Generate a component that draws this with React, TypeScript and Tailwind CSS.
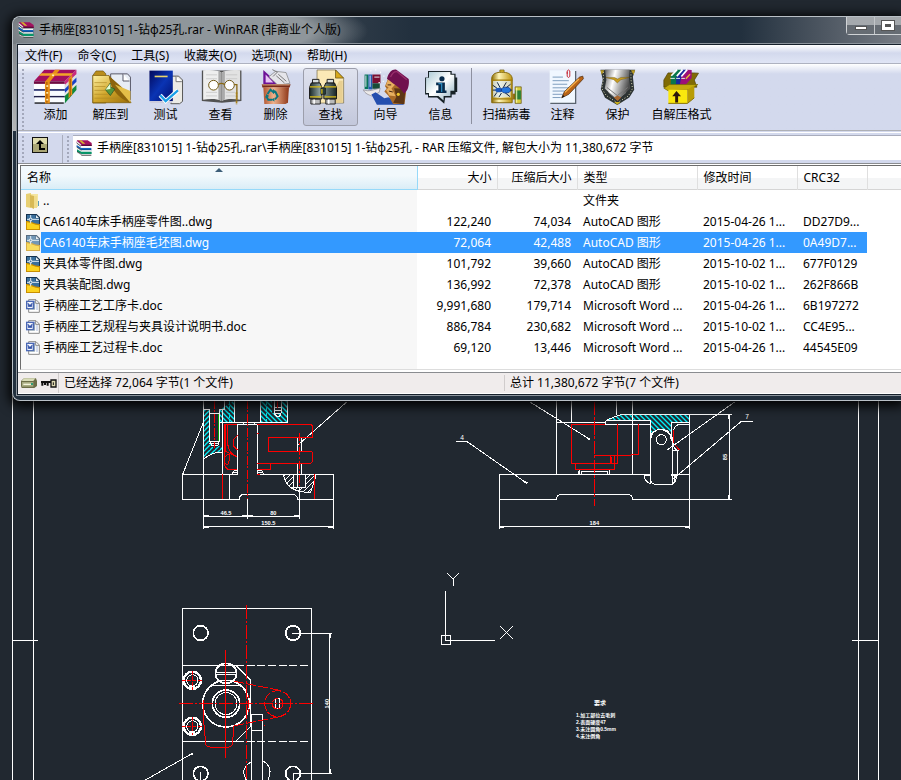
import type { ReactNode } from "react";

/* ── Icons ── */

function RarIcon() {
  return (
    <svg viewBox="0 0 48 48" className="size-4 shrink-0" aria-hidden="true">
      <path d="M3 1h32l12 8v9H16L2 8z" fill="#a3125f" />
      <path d="M2 2l14 12v5L2 9z" fill="#e9e9e9" />
      <path d="M16 14h31v4H16z" fill="#5b0a38" />
      <path d="M8 1h8l12 10h-8z" fill="#d6b42f" />
      <path d="M2 10l14 10h29v4H16L2 14z" fill="#f4f4f4" />
      <path d="M2 15l14 9h30v7H16L2 21z" fill="#1464bc" />
      <path d="M16 29h30v2H16z" fill="#0a2450" />
      <path d="M2 22l14 9h29v4H16L2 26z" fill="#f4f4f4" />
      <path d="M3 28l13 7h31v7H16L3 35z" fill="#0a9468" />
      <path d="M4 36l12 6h30v4H16L4 40z" fill="#e4e4e4" />
      <path d="M2 9l13 10M2 21l14 10M3 35l13 8M16 46h30" stroke="#181818" strokeWidth="2" />
    </svg>
  );
}

function UpIcon() {
  return (
    <svg viewBox="0 0 16 16" className="size-4" aria-hidden="true">
      <rect width="16" height="16" fill="#111" />
      <rect x="1" y="1" width="14" height="14" fill="#a9a574" />
      <rect x="1" y="1" width="14" height="6" fill="#dedbac" />
      <path d="M8 3l4 4H9v4h4v2H7V7H4z" fill="#000" />
    </svg>
  );
}

function FolderIcon() {
  return (
    <svg viewBox="0 0 14 16" className="h-4 w-[14px] shrink-0" aria-hidden="true">
      <path d="M0 1l5-1v15l-5-1z" fill="#e8cf71" />
      <path d="M5 1h7v13H5z" fill="#f4e5a0" />
      <path d="M4 2l4 1v13l-4-2z" fill="#d8b955" />
      <path d="M8 3h3v12H8z" fill="#f0dc8c" />
      <path d="M12 8h1v5h-1z" fill="#5b9bb8" />
    </svg>
  );
}

function DwgIcon() {
  return (
    <svg viewBox="0 0 42 48" className="h-4 w-[14px] shrink-0" aria-hidden="true">
      <path d="M0 0h32l10 10v38H0z" fill="#16324e" />
      <path d="M3 3h26v10h10v22L3 22z" fill="#3a6f9c" />
      <path d="M30 3l9 9h-9z" fill="#e4edf4" />
      <path d="M0 21c14 0 24 8 42 9v18H0z" fill="#c98f00" />
      <path d="M3 25c12 0 22 8 36 9v11H3z" fill="#fbd21f" />
      <path d="M14 3v8M14 20v8M3 16h6M19 16h20" stroke="#dfeaf2" strokeWidth="3" />
      <circle cx="14" cy="16" r="4" fill="#3a6f9c" stroke="#fff" strokeWidth="3" />
    </svg>
  );
}

function DocIcon() {
  return (
    <svg viewBox="0 0 42 42" className="h-[14px] w-[14px] shrink-0" aria-hidden="true">
      <path d="M8 2h22l10 10v28H8z" fill="#fff" stroke="#8a8a8a" strokeWidth="3" />
      <path d="M29 3v10h10" fill="none" stroke="#8a8a8a" strokeWidth="3" />
      <path d="M30 18h6M30 24h6M30 30h6" stroke="#7a94cc" strokeWidth="2" />
      <path d="M0 5h26v26H0z" fill="#4a68b5" />
      <path d="M4 9h16v18H4z" fill="#f2f5fc" />
      <path d="M6 12l3 12 3-8 3 8 3-12" fill="none" stroke="#2b4ba3" strokeWidth="3" />
      <path d="M26 9v22H10" fill="none" stroke="#9aa" strokeWidth="2" />
    </svg>
  );
}

function ToolSvg({ box, children }: { box: string; children: ReactNode }) {
  return (
    <svg viewBox={box} className="h-[37px] w-[49px]" aria-hidden="true">
      {children}
    </svg>
  );
}

const addIcon = (
  <ToolSvg box="93 208 147 111">
    <path d="M100 246L132 210h99l-36 36z" fill="#a3105f" />
    <path d="M100 246h95v8h-95z" fill="#6f0a40" />
    <path d="M195 246l36-36v14l-36 34z" fill="#c92a7d" />
    <path d="M100 254h95v17h-95z" fill="#fff" />
    <path d="M195 258l36-34v10l-36 36z" fill="#dcdcdc" />
    <path d="M100 270h95v5h-95z" fill="#222b6b" />
    <path d="M195 270l36-36v14l-36 36z" fill="#1741c8" />
    <path d="M100 276h95v15h-95z" fill="#f8fbff" />
    <path d="M195 282l36-34v8l-36 36z" fill="#e4e4e4" />
    <path d="M100 291h95v5h-95z" fill="#20204a" />
    <path d="M195 291l36-34v16l-36 41z" fill="#10893c" />
    <path d="M102 296h93v15h-93z" fill="#f8fbff" />
    <path d="M102 311h90v4h-90z" fill="#111" />
    <path d="M134 247l31-37h15l-31 37v67h-15z" fill="#e88f16" />
    <path d="M115 229l8-8h97l-6 8z" fill="#f2a428" />
    <path d="M207 238l11-12v60l-11 12z" fill="#e88f16" />
    <path d="M140 248v64M212 238v54" stroke="#9b5200" strokeWidth="3" />
    <g fill="#fff0ad">
      <rect x="138" y="258" width="6" height="5" />
      <rect x="138" y="279" width="6" height="5" />
      <rect x="138" y="300" width="6" height="5" />
      <rect x="156" y="225" width="6" height="5" />
    </g>
  </ToolSvg>
);

const extractIcon = (
  <ToolSvg box="258 208 147 111">
    <defs>
      <linearGradient id="fold" x2="1" y2="1">
        <stop stopColor="#fff2a4" />
        <stop offset=".5" stopColor="#d1a62b" />
        <stop offset="1" stopColor="#9a6d08" />
      </linearGradient>
    </defs>
    <path d="M277 228l10-14h22l8 9v90h-40z" fill="#b98d1c" stroke="#69500b" strokeWidth="2" />
    <path d="M332 223h52l9 10v70h-61z" fill="#e8edf5" stroke="#556" strokeWidth="3" />
    <path d="M370 223v22h20" fill="#fff" stroke="#556" strokeWidth="3" />
    <path d="M277 228h50l68 84H277z" fill="url(#fold)" stroke="#735405" strokeWidth="2" />
    <path d="M326 228c26 25 55 40 68 84-25-7-62-33-68-84z" fill="#8c640d" />
    <path d="M345 256l48 20v36z" fill="#e4be48" />
    <path d="M282 250h38M282 262h34M282 274h34M282 286h44M282 298h80" stroke="#b08a25" strokeWidth="2" />
    <path d="M316 272l15-21v12l14 7-14 20z" fill="#54963d" stroke="#204a20" strokeWidth="2" />
    <path d="M316 272l15-19v17z" fill="#e6ffdc" />
  </ToolSvg>
);

const testIcon = (
  <ToolSvg box="423 208 147 111">
    <defs>
      <linearGradient id="tbook" x2="1" y2="1">
        <stop stopColor="#02085b" />
        <stop offset=".5" stopColor="#0a34b4" />
        <stop offset="1" stopColor="#021070" />
      </linearGradient>
    </defs>
    <path d="M513 230h24l12 12v66l-9 7h-27z" fill="#ecebe6" stroke="#555" strokeWidth="3" />
    <path d="M529 230v17h18" fill="#fff" stroke="#777" strokeWidth="3" />
    <path d="M447 213h72v94h-72z" fill="url(#tbook)" />
    <path d="M447 307h72l-5 6h-64z" fill="#ccd" />
    <path d="M463 231h40" stroke="#e9d46b" strokeWidth="5" />
    <path d="M480 289l17 18 38-33" fill="none" stroke="#fff" strokeWidth="13" />
    <path d="M480 289l17 18 38-33" fill="none" stroke="#18a0e8" strokeWidth="7" />
  </ToolSvg>
);

const viewIcon = (
  <ToolSvg box="588 208 147 111">
    <path d="M604 213h122v94l-60 5-62-5z" fill="#525252" />
    <path d="M608 212c24-3 44 0 56 6v88c-14-7-36-7-56-3z" fill="#eee" />
    <path d="M722 212c-24-3-44 0-56 6v88c14-7 36-7 56-3z" fill="#e2e2e2" />
    <path d="M655 215l9 4v87l-9-4zM675 215l-9 4v87l9-4z" fill="#aaa" />
    <path d="M617 226h34M617 238h34M617 280h34M617 291h34M678 226h35M678 238h35M678 280h28M678 291h28" stroke="#bdbdbd" strokeWidth="2" />
    <circle cx="640" cy="258" r="15" fill="#fff" stroke="#6e5510" strokeWidth="3" />
    <circle cx="689" cy="258" r="15" fill="#fff" stroke="#6e5510" strokeWidth="3" />
    <path d="M655 256q9-7 19 0M704 256h8v47" fill="none" stroke="#8a6914" strokeWidth="4" />
    <path d="M711 280v37" stroke="#a8801b" strokeWidth="5" strokeDasharray="7 2" />
  </ToolSvg>
);

const deleteIcon = (
  <ToolSvg box="753 208 147 111">
    <defs>
      <linearGradient id="bin">
        <stop stopColor="#b0552f" />
        <stop offset=".4" stopColor="#efb28c" />
        <stop offset="1" stopColor="#8e3718" />
      </linearGradient>
    </defs>
    <path d="M789 211l46 43-46 5z" fill="#6c1197" />
    <path d="M796 225l24 25h-24z" fill="#e8c5f4" />
    <path d="M806 232l21-17 32 4 12 33-37 6z" fill="#e5e5ea" stroke="#777" strokeWidth="2" />
    <path d="M817 210l15 8-13 13M835 224l25 22M829 229l25 22" fill="none" stroke="#777" strokeWidth="3" />
    <path d="M784 255h89l-3 10h-84z" fill="#782b18" />
    <path d="M789 264h79l-3 48-8 4h-65z" fill="url(#bin)" />
    <path d="M786 257h84" stroke="#deb08a" strokeWidth="3" />
    <path d="M802 285l9-13 11 9M825 276l8 16-8 10M817 303h-13l-6-12" fill="none" stroke="#087781" strokeWidth="6" />
    <path d="M819 270v16l9-9zM798 285l9 6-12 8zM823 297v12l-8-7z" fill="#087781" />
  </ToolSvg>
);

const findIcon = (
  <ToolSvg box="18 208 147 111">
    <defs>
      <linearGradient id="barrel">
        <stop stopColor="#1b2929" />
        <stop offset=".4" stopColor="#92a6a4" />
        <stop offset="1" stopColor="#192525" />
      </linearGradient>
    </defs>
    <path d="M50 211h58l24 26v76H50z" fill="#fbe9b6" stroke="#6f643f" strokeWidth="2" />
    <path d="M107 211v25h25z" fill="#d7a81c" stroke="#5a4509" strokeWidth="2" />
    <path d="M118 244h11v68H86z" fill="#e8cf91" />
    <path d="M36 240h20v12H36zM81 240h20v12H81z" fill="#d8dddd" stroke="#222" strokeWidth="3" />
    <path d="M32 251h27l6 14v35H27v-35zM77 251h27l6 14v35H71v-35z" fill="url(#barrel)" stroke="#111" strokeWidth="3" />
    <path d="M62 266h14v20H62z" fill="#263c3c" stroke="#111" strokeWidth="2" />
    <path d="M28 263h36M73 263h36M28 294h36M73 294h36M65 270v14" stroke="#d8b912" strokeWidth="4" />
    <path d="M31 301h29v15H31zM77 301h29v15H77z" fill="#bbb" stroke="#222" strokeWidth="3" />
    <path d="M41 302v13M86 302v13" stroke="#fff" strokeWidth="5" />
  </ToolSvg>
);

const wizardIcon = (
  <ToolSvg box="183 208 147 111">
    <path d="M192 225h12v45h-12z" fill="#08745b" />
    <path d="M204 225h12v46h-12z" fill="#205aae" />
    <path d="M216 225h25v27h-25z" fill="#790e32" />
    <path d="M216 252h23v17h-23z" fill="#194b36" />
    <path d="M196 228v35M209 228v35M222 233h16" stroke="#e3e8ee" strokeWidth="3" />
    <path d="M188 272c18 8 35-2 52-5l-3 13-23 11c-10-4-20-6-26-19z" fill="#eceaea" stroke="#86848b" strokeWidth="2" />
    <path d="M213 287l13-7 27 18 12-3 50 23h-85z" fill="#254fae" />
    <path d="M264 239l31 5 25 37-5 35h-35l-15-26-12-13 7-9-5-7z" fill="#a96a27" />
    <path d="M264 240l28 10-17 18 13 24-20-2-10-17 8-8-8-6z" fill="#e8af60" />
    <path d="M283 267l35 2-4 48-34-5 10-18z" fill="#5d3615" />
    <path d="M261 238c5-21 18-31 29-28l38 29c3 18-3 38-14 45-8-15-27-26-53-46z" fill="#70104e" />
    <path d="M272 233c5-12 13-18 20-17l30 25" fill="none" stroke="#98306c" strokeWidth="4" />
    <path d="M263 257h11M267 276l12 3" stroke="#3f210f" strokeWidth="3" />
    <circle cx="296" cy="286" r="5" fill="#f0c52a" />
    <path d="M210 214h3M225 211h3M240 218h3M250 230h3M248 246h3M235 250h4" stroke="#fff" strokeWidth="4" />
  </ToolSvg>
);

const infoIcon = (
  <ToolSvg box="348 208 147 111">
    <defs>
      <linearGradient id="info" x2="1" y2="1">
        <stop stopColor="#a9c8d4" />
        <stop offset=".5" stopColor="#fff" />
        <stop offset="1" stopColor="#86aabc" />
      </linearGradient>
    </defs>
    <path d="M383 214h73v9h12v11h5v45h-5v8h-12v9h-20l-3 19-22-19h-28v-9h-9v-53h9z" fill="#172126" />
    <path d="M386 217h66v9h12v49h-12v16h-21v14l-16-14h-29v-9h-9v-47h9z" fill="url(#info)" />
    <circle cx="426" cy="238" r="8" fill="#092c4c" />
    <path d="M408 250h27v24h5v8h-32v-8h7v-16h-7z" fill="#092c4c" />
    <path d="M415 253h10v26" fill="none" stroke="#2b88ba" strokeWidth="4" />
  </ToolSvg>
);

const virusIcon = (
  <ToolSvg box="546 208 147 111">
    <defs>
      <linearGradient id="tank">
        <stop stopColor="#8d6d02" />
        <stop offset=".35" stopColor="#fff6b8" />
        <stop offset="1" stopColor="#bd9410" />
      </linearGradient>
    </defs>
    <path d="M599 211h13v9h-13z" fill="#d9b72b" stroke="#675205" strokeWidth="2" />
    <path d="M574 236c2-14 14-18 31-18s29 4 32 18v76h-63z" fill="url(#tank)" stroke="#836709" strokeWidth="3" />
    <path d="M578 245h54v50h-54z" fill="#dff0ff" opacity=".7" />
    <path d="M573 242h65M573 300h65" stroke="#a27c08" strokeWidth="4" />
    <path d="M590 267l-13-9M588 273h-11M590 280l-9 13M600 266l-9-17M604 282l-8 13M609 266l10-17M617 267l15-12M622 273h14M615 281l15 12" stroke="#10223e" strokeWidth="3" />
    <ellipse cx="596" cy="273" rx="11" ry="7" fill="#1958bf" />
    <ellipse cx="618" cy="273" rx="14" ry="9" fill="#2377df" stroke="#092a79" strokeWidth="2" />
    <path d="M638 284h10v18h-10z" fill="#967014" />
    <path d="M646 263h19v51h-19z" fill="#d7cd3c" stroke="#5e4b06" strokeWidth="2" />
    <path d="M647 274h17v28h-17z" fill="#2b7f36" />
    <path d="M651 266v46" stroke="#fbf8b8" strokeWidth="3" />
  </ToolSvg>
);

const commentIcon = (
  <ToolSvg box="714 208 147 111">
    <path d="M748 212h80v101h-80z" fill="#f0f7ff" />
    <path d="M828 214v100h-78" fill="none" stroke="#59636e" strokeWidth="4" />
    <path d="M757 233h32M757 244h50M757 255h45M757 266h51M757 276h43M757 286h33M757 296h25" stroke="#7b9bbd" strokeWidth="3" />
    <path d="M802 217v14q4 6 8 0v-17q-4-6-8 0v9" fill="none" stroke="#c42330" strokeWidth="3" />
    <path d="M785 297l8-19 47-45 10-3 2 8-45 48z" fill="#b96315" stroke="#412005" strokeWidth="2" />
    <path d="M795 280l43-41" stroke="#f8b24c" strokeWidth="4" />
    <path d="M785 297l4-9 5 5z" fill="#111" />
  </ToolSvg>
);

const protectIcon = (
  <ToolSvg box="-21 208 147 111">
    <defs>
      <linearGradient id="shield" x2="1" y2=".3">
        <stop stopColor="#5c5c5c" />
        <stop offset=".4" stopColor="#fff" />
        <stop offset=".65" stopColor="#b4b4b4" />
        <stop offset="1" stopColor="#4c4c4c" />
      </linearGradient>
    </defs>
    <path d="M0 210h107l-7 22 4 40-15 24-37 23-38-22L1 270l6-30z" fill="#2d3333" />
    <path d="M14 210h76l-2 28 4 30-40 36-39-36 5-26z" fill="url(#shield)" />
    <path d="M9 217v24l-5 27 14 22 34 22 34-21 13-23-5-27v-24" fill="none" stroke="#dfdfb8" strokeWidth="3" strokeDasharray="3 6" />
    <path d="M15 234h28l10 5 10-5h27l-27 7-11 10-11-10z" fill="#c59b20" stroke="#4b3907" strokeWidth="1" />
    <path d="M20 265l32 25 32-25M24 280l28 23 27-23" fill="none" stroke="#777" strokeWidth="3" />
    <path d="M41 296l12-6 11 6-11 11z" fill="#a8662e" />
    <path d="M42 310h20l-10 8z" fill="#c9ad1d" />
    <path d="M0 212h12l-8 14zM107 212H94l8 14z" fill="#b89a24" />
  </ToolSvg>
);

const sfxIcon = (
  <ToolSvg box="171 208 147 111">
    <path d="M190 242l13-22h78l16 1-13 21 8 22H190z" fill="#806b05" stroke="#4b3d00" strokeWidth="2" />
    <path d="M212 230l19-20h12l-14 48h-18z" fill="#08764c" />
    <path d="M229 231l18-21h12l-15 48h-17z" fill="#172a9c" />
    <path d="M244 232l18-22 14 1v25l-20 22h-17z" fill="#9c1078" />
    <path d="M213 229l18-19M230 230l18-20M244 231l18-21" stroke="#fff" strokeWidth="5" />
    <path d="M210 237h14M228 237h12M244 237h11" stroke="#dff1ea" strokeWidth="3" />
    <path d="M258 238l13-14" stroke="#eabd31" strokeWidth="4" />
    <path d="M190 267l17-11h88l-27 16-65 3z" fill="#c4ad0c" stroke="#716300" strokeWidth="2" />
    <path d="M204 272h58v42h-58z" fill="#fae80e" />
    <path d="M262 272l22-14v39l-22 17z" fill="#b89c05" />
    <path d="M204 314h59l21-17" fill="none" stroke="#857000" strokeWidth="3" />
    <path d="M229 276l14 16h-9v19h-9v-19h-9z" fill="#2d1709" />
  </ToolSvg>
);

/* ── Data ── */

const menus = ["文件(F)", "命令(C)", "工具(S)", "收藏夹(O)", "选项(N)", "帮助(H)"];

const tools = [
  { label: "添加", icon: addIcon },
  { label: "解压到", icon: extractIcon },
  { label: "测试", icon: testIcon },
  { label: "查看", icon: viewIcon },
  { label: "删除", icon: deleteIcon },
  { label: "查找", icon: findIcon, active: true },
  { label: "向导", icon: wizardIcon },
  { label: "信息", icon: infoIcon },
];

const extraTools = [
  { label: "扫描病毒", icon: virusIcon, width: "w-[57px]" },
  { label: "注释", icon: commentIcon, width: "w-[55px]" },
  { label: "保护", icon: protectIcon, width: "w-[55px]" },
  { label: "自解压格式", icon: sfxIcon, width: "w-[73px]" },
];

const files = [
  { kind: "dir", name: "..", size: "", packed: "", type: "文件夹", date: "", crc: "" },
  { kind: "dwg", name: "CA6140车床手柄座零件图..dwg", size: "122,240", packed: "74,034", type: "AutoCAD 图形", date: "2015-04-26 1...", crc: "DD27D9..." },
  { kind: "dwg", name: "CA6140车床手柄座毛坯图.dwg", size: "72,064", packed: "42,488", type: "AutoCAD 图形", date: "2015-04-26 1...", crc: "0A49D7...", selected: true },
  { kind: "dwg", name: "夹具体零件图.dwg", size: "101,792", packed: "39,660", type: "AutoCAD 图形", date: "2015-10-02 1...", crc: "677F0129" },
  { kind: "dwg", name: "夹具装配图.dwg", size: "136,992", packed: "72,378", type: "AutoCAD 图形", date: "2015-10-02 1...", crc: "262F866B" },
  { kind: "doc", name: "手柄座工艺工序卡.doc", size: "9,991,680", packed: "179,714", type: "Microsoft Word ...", date: "2015-04-26 1...", crc: "6B197272" },
  { kind: "doc", name: "手柄座工艺规程与夹具设计说明书.doc", size: "886,784", packed: "230,682", type: "Microsoft Word ...", date: "2015-10-02 1...", crc: "CC4E95..." },
  { kind: "doc", name: "手柄座工艺过程卡.doc", size: "69,120", packed: "13,446", type: "Microsoft Word ...", date: "2015-04-26 1...", crc: "44545E09" },
];

function Gripper() {
  return (
    <span className="w-[10px] shrink-0 self-stretch bg-[radial-gradient(circle_at_5px_2px,#a3a8bb_1px,transparent_1px)] bg-[length:10px_4px]" />
  );
}

function ToolButton({ label, icon, width, active }: { label: string; icon: ReactNode; width: string; active?: boolean }) {
  return (
    <button
      type="button"
      className={`${width} flex h-[58px] shrink-0 flex-col items-center rounded-[3px] border whitespace-nowrap ${
        active ? "border-[#9c9eab] bg-linear-to-b from-[#dfe2ee] to-[#c3c8dc]" : "border-transparent"
      }`}
    >
      {icon}
      <span className="leading-5">{label}</span>
    </button>
  );
}

/* ── CAD drawing behind the window ── */

function Drawing() {
  return (
    <svg
      className="absolute inset-0 h-full w-full"
      fill="none"
      stroke="#fff"
      shapeRendering="crispEdges"
      fontFamily='"Liberation Sans", "Noto Sans CJK SC", sans-serif'
      aria-hidden="true"
    >
      <defs>
        <pattern id="hatch" width="15" height="15" patternUnits="userSpaceOnUse">
          <path d="M0 0l15 15M-7 8l15 15M8-7l15 15" stroke="#00f0f8" strokeWidth="4" shapeRendering="auto" />
        </pattern>
        <pattern id="hatchBack" width="15" height="15" patternUnits="userSpaceOnUse">
          <path d="M15 0L0 15M23 8L8 23M8-8L-8 8" stroke="#00f0f8" strokeWidth="4" shapeRendering="auto" />
        </pattern>
        <pattern id="hatchWhite" width="15" height="15" patternUnits="userSpaceOnUse">
          <path d="M15 0L0 15M23 8L8 23M8-8L-8 8" stroke="#fff" strokeWidth="3" shapeRendering="auto" />
        </pattern>
      </defs>

      {/* sheet frame */}
      <path d="M12.500 395V780M33.500 395V780M858.500 395V780M878.500 395V780M13 640.500h25M852 640.500h26" />

      {/* front view */}
      <svg x="170" y="390" width="200" height="150" viewBox="0 0 600 450" strokeWidth="3">
        <path d="M100 60h17v94l12 20 28-8v22q-32 0-57 20z" fill="url(#hatchBack)" stroke="none" />
        <path d="M148 60l45-30v67h-45zM272 30h80v67h-80z" fill="url(#hatch)" stroke="none" />
        <path d="M305 30h32v40h-32z" fill="#212830" stroke="none" />
        <path d="M100 30v222M157 60v192M100 58h17M147 58h15V30M117 58v95h31V58M118 70h28M118 153l8 14h17l5-14M118 160h28M193 30v67h-45M272 30v67h80V30M100 208q25-22 57-22" />
        <path d="M179 30v67M290 30v67" stroke="#00e5ee" strokeDasharray="15 4" />
        <path d="M146 72v82" stroke="#00a000" />
        <path d="M312 30v40l8 9h9l4-9V30M312 52h22M312 62h22M312 70h22" />
        <path d="M38 253L100 97M38 253h164V103h60v150h228v75H383q-3-14-15-15H222q-14 1-14 15H38zM179 253v75M188 253q-1-12 14-12M188 248h14M262 241q18-2 18 12M262 248h18M193 97h79M219 97v6M252 97v6" />
        <path d="M340 253q8 55 82 54l17-54z" fill="url(#hatchWhite)" />
        <path d="M371 253h34v40h-34z" fill="#212830" />
        <path d="M383 141v44M395 141v44M383 220v72M395 220v33M385 164L530 36" />
        <g stroke="#f00">
          <path d="M200 103h-37v123l10 12h29M262 103h160l6 6v33h-40M262 220h126M262 238h40v-18M262 253h8M295 142v43h93M295 142h93M388 184h34q6 2 6 8v22l-6 6h-34M172 103v55q5 35 30 42M202 136l-12 14v18l12 12M165 200q17-18 13 8t-13 10M166 103v80l35 18M157 253v75M433 253v75M262 130h5" />
          <path d="M232 30v298M134 30v145M388 128v160M322 30v25" strokeDasharray="26 5 6 5" />
        </g>
        <path d="M100 253v163M232 328v58M388 295v91M490 328v88M100 379h288M100 409h390M232 376v6" />
        <path d="M100 379h17M215 379h34M372 379h16M100 410h16M475 410h15" strokeWidth="6" />
        <g fill="#fff" stroke="none" fontSize="17" fontWeight="bold" textAnchor="middle">
          <text x="168" y="376">46.5</text>
          <text x="310" y="376">80</text>
          <text x="295" y="405">150.5</text>
        </g>
      </svg>

      {/* side view */}
      <svg x="440" y="390" width="340" height="150" viewBox="0 0 1020 450" strokeWidth="3">
        <path d="M497 92q20-10 45-18h206v24h-54v42q-30-40-62-6V92z" fill="url(#hatch)" />
        <path d="M350 30v223M395 30v67M529 30v45M577 30v223M350 97h147v6h135M497 92v11M179 253h453v20q2 8 12 10h52V140M632 92v180M632 150q3-32 32-32t30 35" />
        <path d="M748 74v342M716 97h32M748 103h-28q-18 2-20 22v40q2 12 11 15v73M179 253v163M694 253h54M179 328h171q0-14 14-15h200q13 1 13 15h298M748 74h127M868 74v254" />
        <circle cx="664" cy="149" r="15" />
        <path d="M612 256h20v25q-20-7-20-25zM694 256h16q0 20-14 26M704 256v20M418 253v-14M424 253v-10h78v10M508 253v-14M418 244h-4v9M508 244v9" />
        <path d="M270 36l178 111M48 154h32l178 124M884 36L680 181M938 94h-34L696 270M696 181h22" />
        <path d="M442 144l7 5M254 275l7 5M868 74v14M868 316v12M179 410h14M734 410h14" strokeWidth="6" />
        <g stroke="#f00">
          <path d="M463 36v312" strokeDasharray="40 5 8 5" />
          <path d="M395 103h100M395 103v117h137V103M596 103v90h-20l-6 3H463M406 220v18h116v-18M510 196v24M524 196v24M514 200v18M700 120v40M706 165l12 15M395 220h40" />
        </g>
        <path d="M179 409h569" />
        <g fill="#fff" stroke="none" fontSize="20" textAnchor="middle">
          <text x="66" y="149">4</text>
          <text x="921" y="86">7</text>
          <text x="463" y="405" fontSize="17" fontWeight="bold">184</text>
          <text x="856" y="207" fontSize="17" fontWeight="bold" transform="rotate(-90 856 201)">85</text>
        </g>
      </svg>

      {/* top view */}
      <svg x="130" y="590" width="240" height="190" viewBox="0 0 720 570" strokeWidth="3">
        <path d="M158 570V56h386v514M158 226h160l44 45v138l-45 45H158" />
        <path d="M318 226h226M318 454h226" strokeDasharray="24 8" />
        <g strokeWidth="5">
          <circle cx="212" cy="129" r="22" />
          <circle cx="489" cy="129" r="22" />
          <circle cx="212" cy="551" r="22" />
          <circle cx="489" cy="551" r="22" />
          <circle cx="288" cy="341" r="70" />
          <circle cx="288" cy="341" r="41" />
          <ellipse cx="288" cy="250" rx="32" ry="30" />
        </g>
        <circle cx="288" cy="341" r="33" />
        <path d="M257 246h62M257 252h62M246 286h84M364 570V373h34v197M364 421h34M364 515q-36 22-15 55M398 512q34 20 16 58" />
        <circle cx="187" cy="271" r="26" strokeWidth="7" />
        <circle cx="187" cy="271" r="17" />
        <circle cx="187" cy="409" r="26" strokeWidth="7" />
        <circle cx="187" cy="409" r="17" />
        <path d="M178 291h18M178 429h18" strokeWidth="10" />
        <path d="M436 325h13v31h-13zM487 130h118M599 130v420M489 570v-20h116M212 546v24M46 570l140-79h3" />
        <path d="M600 132v12M600 538v12M183 491h7" strokeWidth="6" />
        <g stroke="#f00">
          <path d="M349 45v525M147 341h408" strokeDasharray="42 5 8 5" />
          <path d="M286 180v323" />
          <path d="M313 274l130 26M313 407l130-26" strokeDasharray="30 6" />
          <circle cx="443" cy="341" r="39" strokeDasharray="28 5" />
          <circle cx="443" cy="341" r="16" strokeDasharray="22 5" />
          <path d="M219 370l8 91q2 10 12 10h58q10-2 11-12l3-50M220 330v50M402 406h4" />
          <path d="M155 271h64M187 243v56M155 409h64M187 380v56" strokeDasharray="12 4" />
          <path d="M355 315v55" strokeDasharray="10 4" />
        </g>
        <text x="591" y="347" fill="#fff" stroke="none" fontSize="17" fontWeight="bold" textAnchor="middle" transform="rotate(-90 591 341)">140</text>
      </svg>

      {/* UCS marker */}
      <path d="M445.500 591v49h49M441.500 635.500h9v9h-9z" />
      <path d="M447 573l6 6 6-6M453.500 579v7M500 626l13 13M513 626l-13 13" shapeRendering="auto" />

      {/* technical notes */}
      <g fill="#fff" stroke="none" fontSize="5" fontWeight="bold">
        <text x="594" y="705" fontSize="6">要求</text>
        <text x="576" y="717">1.加工部位去毛刺</text>
        <text x="576" y="724">2.表面硬度47</text>
        <text x="576" y="731">3.未注圆角0.5mm</text>
        <text x="576" y="738">4.未注倒角</text>
      </g>
    </svg>
  );
}

export default function App() {
  return (
    <div className="relative min-h-screen overflow-hidden bg-[#212830] pt-4 pl-3 font-['Noto_Sans','Noto_Sans_CJK_SC',sans-serif] text-xs text-black">
      <Drawing />

      {/* ── WinRAR window ── */}
      <section className="relative rounded-l-lg border-y border-l border-[#b9c0c6] bg-[#22303e] bg-[linear-gradient(#74797e,#b4b6b8)] bg-[length:5px_114px] bg-no-repeat pb-[5px] pl-1 shadow-[0_2px_12px_3px_#000]">
        {/* title bar */}
        <header className="-ml-1 flex h-[27px] items-start rounded-tl-lg bg-[radial-gradient(ellipse_190px_40px_at_165px_14px,#8f969b_70%,transparent),linear-gradient(90deg,#6c7278,#22303e_45%,#22303e_82%,#767b83)]">
          <div className="flex h-[26px] flex-1 items-center gap-[5px] pl-[5px]">
            <RarIcon />
            <h1 className="whitespace-nowrap">手柄座[831015] 1-钻φ25孔.rar - WinRAR (非商业个人版)</h1>
          </div>
          <div className="flex h-[18px] rounded-bl border-b border-l border-[#d0d3d6]">
            <button type="button" aria-label="最小化" className="flex w-7 items-end justify-center border-r border-[#c3c6c9] bg-linear-to-b from-[#a5a9ad] from-50% to-[#666c73] to-50% pb-1">
              <span className="h-1 w-3 border border-[#555] bg-white" />
            </button>
            <button type="button" aria-label="最大化" className="flex w-[26px] items-center justify-center bg-linear-to-b from-[#a5a9ad] from-50% to-[#666c73] to-50%">
              <span className="h-[9px] w-3 border-3 border-white bg-[#555] outline outline-[#555]" />
            </button>
          </div>
        </header>

        <div className="border-y border-l border-y-[#16202b] border-l-[#16202b] bg-[#d3d9ed] outline outline-[#8c949c]">
          {/* menu */}
          <nav className="flex h-[19px] items-center gap-[15px] border-b border-[#aeb2c0] bg-linear-to-b from-white via-[#d3d9ed] via-45% to-[#e0e5f5] pt-[3px] pl-[7px] whitespace-nowrap">
            {menus.map((m) => (
              <button key={m} type="button" className="leading-4">
                {m}
              </button>
            ))}
          </nav>

          {/* toolbar */}
          <div className="flex h-[67px] items-start border-b border-[#aeb0b6] bg-linear-to-b from-white to-[#d3d9ed] to-15% pt-1">
            <Gripper />
            {tools.map((t) => (
              <ToolButton key={t.label} label={t.label} icon={t.icon} width="w-[55px]" active={t.active} />
            ))}
            <span className="mr-[6px] ml-[3px] h-14 w-px bg-[#8d90a0]" />
            {extraTools.map((t) => (
              <ToolButton key={t.label} label={t.label} icon={t.icon} width={t.width} />
            ))}
          </div>

          {/* address bar */}
          <div className="mt-px flex h-[31px] border-t border-white pt-0.5">
            <Gripper />
            <div className="flex w-[35px] items-start border-r border-[#a9adbd] pt-0.5 pl-1">
              <button type="button" aria-label="向上一级" className="h-4">
                <UpIcon />
              </button>
            </div>
            <Gripper />
            <label className="flex h-[25px] flex-1 items-center gap-[5px] border-t border-[#a9adbd] bg-white pl-[3px]">
              <RarIcon />
              <input
                aria-label="地址"
                className="w-full bg-transparent outline-none"
                defaultValue="手柄座[831015] 1-钻φ25孔.rar\手柄座[831015] 1-钻φ25孔 - RAR 压缩文件, 解包大小为 11,380,672 字节"
              />
            </label>
          </div>

          {/* file list */}
          <div className="border-y border-[#8a8c90] bg-white pt-px pb-0.5 pl-0.5">
            <div className="border-t border-b border-l border-t-[#6d6d6d] border-b-[#ddd] border-l-[#6d6d6d]">
              <table className="w-full table-fixed border-collapse text-left whitespace-nowrap">
                <colgroup>
                  <col className="w-[396px]" />
                  <col className="w-[80px]" />
                  <col className="w-[80px]" />
                  <col className="w-[120px]" />
                  <col className="w-[100px]" />
                  <col className="w-[70px]" />
                  <col />
                </colgroup>
                <thead>
                  <tr className="h-6 bg-linear-to-b from-white from-50% to-[#f4f5f6] to-50% shadow-[inset_0_-1px_#d5d5d5]">
                    <th className="relative border-r border-[#96d9f9] bg-linear-to-b from-[#f2f9fc] from-40% to-[#d8ecf6] pl-1.5 font-normal shadow-[inset_0_-1px_#96d9f9]">
                      名称
                      <span className="absolute top-0.5 left-[194px] border-x-4 border-b-4 border-x-transparent border-b-[#3c5e78]" />
                    </th>
                    <th className="border-r border-[#dfdfdf] pr-[5px] text-right font-normal">大小</th>
                    <th className="border-r border-[#dfdfdf] pr-[5px] text-right font-normal">压缩后大小</th>
                    <th className="border-r border-[#dfdfdf] pl-1.5 font-normal">类型</th>
                    <th className="border-r border-[#dfdfdf] pl-1.5 font-normal">修改时间</th>
                    <th className="border-r border-[#dfdfdf] pl-1.5 font-normal">CRC32</th>
                    <th />
                  </tr>
                </thead>
                <tbody>
                  {files.map((f) => {
                    const cell = f.selected ? "bg-[#3399ff] text-white" : "";
                    return (
                      <tr key={f.name} className="h-[21px]">
                        <td className="bg-[#f7f7f7] p-0 pl-[5px]">
                          <div className="flex h-[21px] items-center gap-px">
                            <span className={f.selected ? "opacity-70" : ""}>
                              {f.kind === "dir" && <FolderIcon />}
                              {f.kind === "dwg" && <DwgIcon />}
                              {f.kind === "doc" && <DocIcon />}
                            </span>
                            <span className={`flex-1 pl-0.5 leading-[21px] ${cell}`}>{f.name}</span>
                          </div>
                        </td>
                        <td className={`p-0 pr-1.5 text-right ${cell}`}>{f.size}</td>
                        <td className={`p-0 pr-1.5 text-right ${cell}`}>{f.packed}</td>
                        <td className={`p-0 pl-1.5 ${cell}`}>{f.type}</td>
                        <td className={`p-0 pl-1.5 ${cell}`}>{f.date}</td>
                        <td className={`p-0 pl-1.5 ${cell}`}>{f.crc}</td>
                        <td />
                      </tr>
                    );
                  })}
                  <tr className="h-[11px]">
                    <td className="bg-[#f7f7f7] p-0" />
                    <td colSpan={6} className="p-0" />
                  </tr>
                </tbody>
              </table>
            </div>
          </div>

          {/* status bar */}
          <footer className="flex h-[21px] items-center border-b border-white bg-[#f0ecec] whitespace-nowrap">
            <div className="flex h-full w-[41px] items-center gap-1 border-r border-[#d0cccc] pl-[3px]">
              <svg viewBox="0 0 48 30" className="h-[10px] w-4" aria-hidden="true">
                <path d="M9 1h36l3 8v15l-8 6H2l-2-6V9z" fill="#6b6d47" />
                <path d="M9 1h34l-6 8H2z" fill="#d9dcb8" />
                <path d="M3 12h34v14H3z" fill="#a8ab82" />
                <path d="M7 19h26" stroke="#f4f4dc" strokeWidth="4" />
                <path d="M30 15h6v6h-6z" fill="#2f9e76" />
              </svg>
              <svg viewBox="0 0 48 27" className="h-[9px] w-4" aria-hidden="true">
                <path d="M0 9h30M4 12v8M12 12v6M20 12v8" stroke="#111" strokeWidth="6" fill="none" />
                <path d="M30 3h15v21H30z" fill="#ded9b2" stroke="#111" strokeWidth="4" />
                <path d="M37 10v8" stroke="#111" strokeWidth="3" />
              </svg>
            </div>
            <span className="w-[446px] border-r border-[#d0cccc] pl-[5px]">已经选择 72,064 字节(1 个文件)</span>
            <span className="pl-[5px]">总计 11,380,672 字节(7 个文件)</span>
          </footer>
        </div>
      </section>
    </div>
  );
}
